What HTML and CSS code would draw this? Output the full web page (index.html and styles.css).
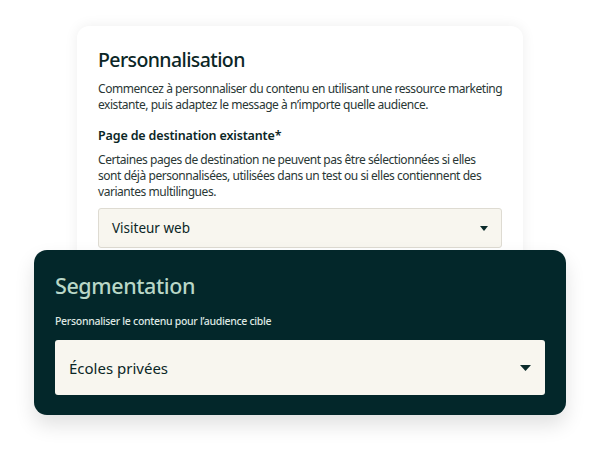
FILE: index.html
```html
<!DOCTYPE html>
<html lang="fr">
<head>
<meta charset="utf-8">
<link rel="stylesheet" href="styles.css">
</head>
<body>
<div class="stage">
  <section class="card">
    <h1 class="title">Personnalisation</h1>
    <p class="lead">Commencez à personnaliser du contenu en utilisant une ressource marketing<br>existante, puis adaptez le message à n’importe quelle audience.</p>
    <h2 class="label">Page de destination existante*</h2>
    <p class="help">Certaines pages de destination ne peuvent pas être sélectionnées si elles<br>sont déjà personnalisées, utilisées dans un test ou si elles contiennent des<br>variantes multilingues.</p>
    <div class="select">
      <span>Visiteur web</span>
      <svg class="caret" width="8" height="5" viewBox="0 0 8 5"><path d="M0 0H8L4 5Z" fill="#0b2b2b"/></svg>
    </div>
  </section>
  <section class="dark">
    <h2 class="seg-title">Segmentation</h2>
    <p class="seg-sub">Personnaliser le contenu pour l’audience cible</p>
    <div class="select select-lg">
      <span>Écoles privées</span>
      <svg class="caret" width="11" height="6" viewBox="0 0 11 6"><path d="M0 0H11L5.5 6Z" fill="#0b2b2b"/></svg>
    </div>
  </section>
</div>
</body>
</html>
```
FILE: styles.css
```css
* { box-sizing: border-box; }
html, body { margin: 0; padding: 0; background: #ffffff; }
body {
  width: 600px;
  height: 450px;
  overflow: hidden;
  font-family: "Noto Sans", "Open Sans", sans-serif;
  color: #1f2f2f;
}
.stage {
  padding-top: 26px;
  display: flex;
  flex-direction: column;
  align-items: center;
}
.card {
  width: 446px;
  background: #ffffff;
  border-radius: 12px;
  box-shadow: 0 0 14px rgba(0, 0, 0, 0.07);
  padding: 22px 21px 22px 21px;
}
.title {
  margin: 0;
  font-size: 19.5px;
  line-height: 24px;
  font-weight: 500;
  letter-spacing: -0.6px;
  color: #0b2626;
}
.lead, .help {
  margin: 9px 0 0;
  font-size: 12px;
  line-height: 16px;
  letter-spacing: -0.45px;
  white-space: nowrap;
  color: #2a3735;
}
.help { margin-top: 8px; }
.label {
  margin: 15px 0 0;
  font-size: 12.5px;
  line-height: 16px;
  font-weight: 600;
  letter-spacing: -0.15px;
  color: #0b2626;
}
.select {
  margin-top: 8px;
  height: 40px;
  background: #f8f6ef;
  border: 1px solid #dedbd2;
  border-radius: 3px;
  display: flex;
  align-items: center;
  justify-content: space-between;
  padding: 0 13px 0 13px;
  font-size: 13.5px;
  font-weight: 400;
  color: #0b2626;
}
.select .caret { display: block; }
.dark {
  position: relative;
  width: 532px;
  margin-top: -20px;
  background: #03272a;
  border-radius: 13px;
  box-shadow: 0 10px 20px rgba(0, 0, 0, 0.12);
  padding: 22px 21px 20px 21px;
}
.seg-title {
  margin: 0;
  font-size: 21.5px;
  line-height: 28px;
  font-weight: 500;
  letter-spacing: -0.4px;
  color: #b9d7c7;
}
.seg-sub {
  margin: 14px 0 0;
  font-size: 10.5px;
  line-height: 14px;
  font-weight: 500;
  letter-spacing: -0.3px;
  color: #dfe8e3;
}
.select-lg {
  margin-top: 12px;
  height: 55px;
  border: none;
  border-radius: 3px;
  padding: 0 14px;
  font-size: 15px;
}
```
